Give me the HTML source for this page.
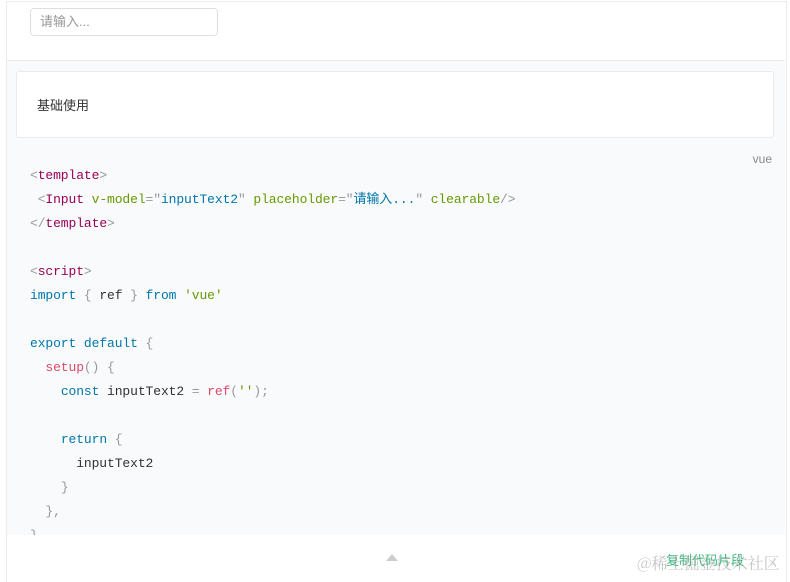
<!DOCTYPE html>
<html><head><meta charset="utf-8"><style>
body{margin:0;width:790px;height:577px;overflow:hidden;background:#fff;font-family:"Liberation Sans","Noto Sans CJK SC",sans-serif;position:relative}
.frame{position:absolute;left:6px;top:1px;width:779px;height:580px;border-left:1px solid #ebebeb;border-right:1px solid #ebebeb;border-top:1px solid #ebebeb}
.inp{position:absolute;left:30px;top:8px;border:1px solid #dcdfe6;border-radius:4px;font-size:13px;color:#999;line-height:26px;padding-left:9px;box-sizing:border-box;width:188px;height:28px}
.code{position:absolute;left:7px;top:60px;width:778px;height:475px;background:#f9fafb;border-top:1px solid #ebebeb}
.card{position:absolute;left:16px;top:71px;width:758px;height:67px;background:#fff;border:1px solid #ebebeb;border-radius:3px;box-sizing:border-box}
.card span{position:absolute;left:20px;top:23px;font-size:13px;color:#333}
.vue{position:absolute;right:18px;top:152px;font-size:12px;color:#888}
pre{position:absolute;left:30px;top:164px;margin:0;font-family:"Liberation Mono","Noto Sans CJK SC",monospace;font-size:13px;line-height:24px;color:#333;letter-spacing:-0.1px}
.t{color:#905}.p{color:#999}.a{color:#690}.s{color:#07a}.k{color:#07a}.f{color:#dd4a68}.g{color:#690}
.foot{position:absolute;left:7px;top:535px;width:778px;height:42px;background:#fff}
.tri{position:absolute;left:386px;top:554px;width:0;height:0;border-left:6px solid transparent;border-right:6px solid transparent;border-bottom:7px solid #ccc}
.copy{position:absolute;left:666px;top:550px;font-size:13px;color:#42b983}
.wm{position:absolute;left:637px;top:551px;font-size:16px;color:rgba(150,150,150,.55);font-family:"Noto Serif CJK SC",serif}
</style></head><body>
<div class="frame"></div>
<div class="inp">请输入...</div>
<div class="code"></div>
<div class="card"><span>基础使用</span></div>
<div class="vue">vue</div>
<pre><span class="p">&lt;</span><span class="t">template</span><span class="p">&gt;</span>
 <span class="p">&lt;</span><span class="t">Input</span> <span class="a">v-model</span><span class="p">="</span><span class="s">inputText2</span><span class="p">"</span> <span class="a">placeholder</span><span class="p">="</span><span class="s">请输入...</span><span class="p">"</span> <span class="a">clearable</span><span class="p">/&gt;</span>
<span class="p">&lt;/</span><span class="t">template</span><span class="p">&gt;</span>

<span class="p">&lt;</span><span class="t">script</span><span class="p">&gt;</span>
<span class="k">import</span> <span class="p">{</span> ref <span class="p">}</span> <span class="k">from</span> <span class="g">'vue'</span>

<span class="k">export</span> <span class="k">default</span> <span class="p">{</span>
  <span class="f">setup</span><span class="p">() {</span>
    <span class="k">const</span> inputText2 <span class="p">=</span> <span class="f">ref</span><span class="p">(</span><span class="g">''</span><span class="p">);</span>

    <span class="k">return</span> <span class="p">{</span>
      inputText2
    <span class="p">}</span>
  <span class="p">},</span>
<span class="p">}</span></pre>
<div class="foot"></div>
<div class="tri"></div>
<div class="copy">复制代码片段</div>
<div class="wm">@稀土掘金技术社区</div>
</body></html>
